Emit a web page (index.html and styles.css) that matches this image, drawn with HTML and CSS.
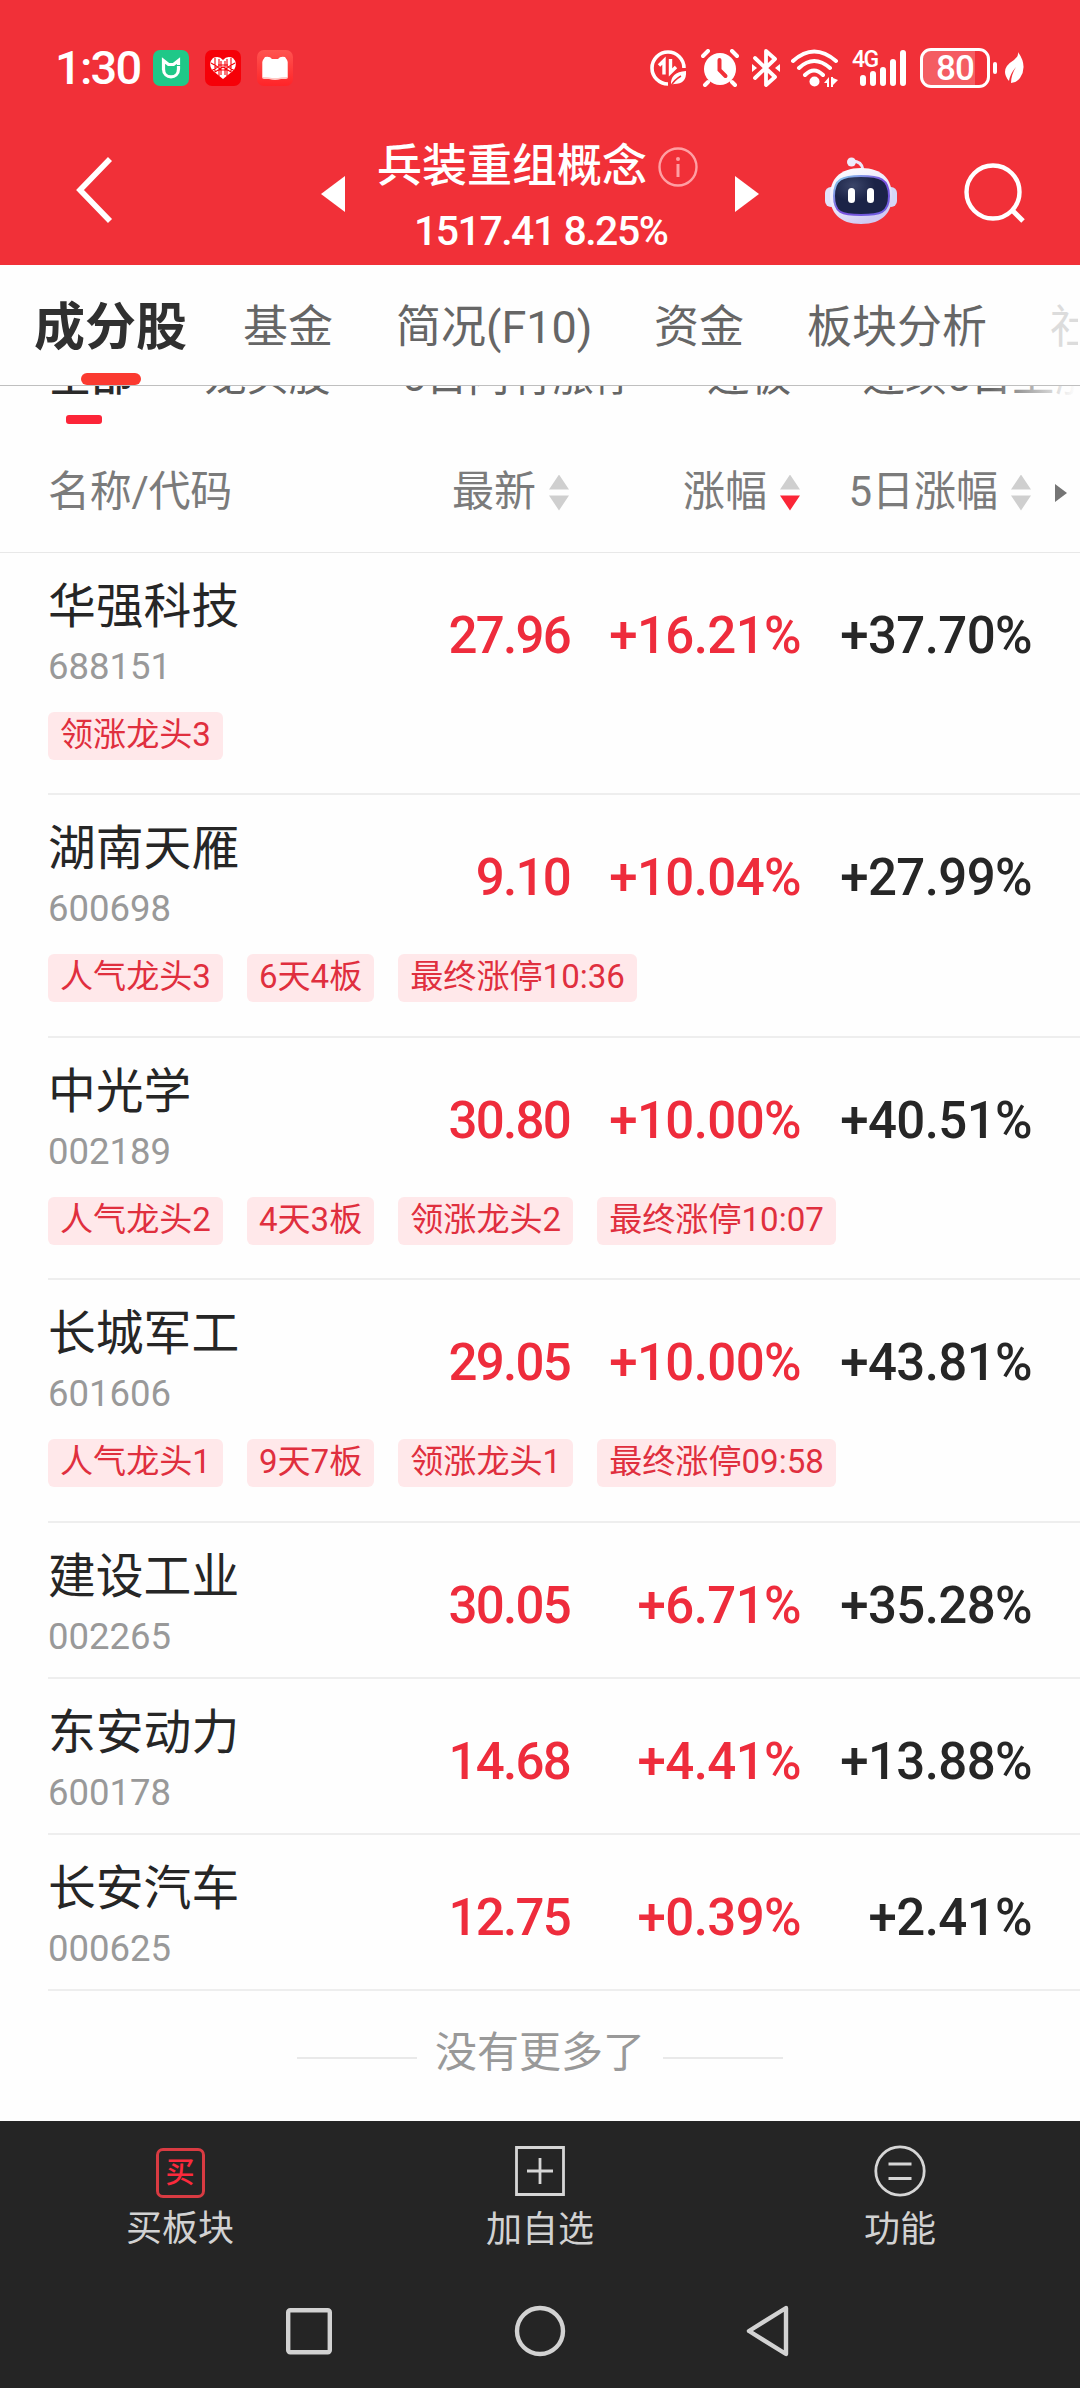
FILE: index.html
```html
<!DOCTYPE html>
<html lang="zh-CN">
<head>
    <meta charset="UTF-8">
    <meta name="viewport" content="width=device-width, initial-scale=1.0">
    <title>兵装重组概念</title>
    <link rel="stylesheet" href="styles.css">
</head>
<body>

    <header class="top">
        <div class="status-bar">
            <span class="clock">1:30</span>
            <div class="app-icons">
                <svg width="36" height="36" viewBox="0 0 36 36"><rect width="36" height="36" rx="7" fill="#1fc888"/><path d="M10.500 20V10.500l5 4h5l5-4V15M10.500 19c0 10.500 15 10.500 15 0v-3" fill="none" stroke="#fff" stroke-width="3.2"/></svg>
                <svg width="36" height="36" viewBox="0 0 36 36"><rect width="36" height="36" rx="7" fill="#f60008"/><path d="M18 29L7 20Q3 13 8 8q6-3 10 2 4-5 10-2 5 5 1 12z" fill="#fff"/><path d="M10 8v14M14 9v17M22 9v17M26 8v14M6 13l7 4-7 4M30 13l-7 4 7 4M13 15h10M13 20h10M16 11v14M20 11v14M10 22l8-5 8 5" fill="none" stroke="#f60008" stroke-width="1.1"/></svg>
                <svg width="36" height="36" viewBox="0 0 36 36"><defs><linearGradient id="book" x2="0" y2="1"><stop stop-color="#ff5450"/><stop offset="1" stop-color="#ff2428"/></linearGradient></defs><rect width="36" height="36" rx="7" fill="url(#book)"/><path d="M5 12q0-2 3-3h20q3 1 3 3v15q0 2-2 2h-5q-6 2-12 0H7q-2 0-2-2z" fill="#ffc9c5"/><path d="M6 10l2-3q5-1 7 2h6q2-3 7-2l2 3v17q-6 0-9 1h-6q-3-1-9-1z" fill="#fff"/></svg>
            </div>
            <div class="sys-icons">
                <svg width="38" height="38" viewBox="0 0 38 38"><path d="M19 35A16 16 0 1 1 35 19" fill="none" stroke="#fff" stroke-width="3.6"/><path d="M10 16.500l5-5v14M21.500 10v13.500l5.500-5.500" fill="none" stroke="#fff" stroke-width="3.4"/><path d="M22 36q-1-13 15-14 1 13-12 13z" fill="#fff"/><path d="M22 37q3-6 10-10" stroke="#f13038" stroke-width="1.5" fill="none"/></svg>
                <svg class="i-alarm" width="38" height="38" viewBox="0 0 38 38"><circle cx="19" cy="20" r="16" fill="#fff"/><path d="M2 7l5-5M31 2l5 5M7 33l-3 3M31 33l3 3" stroke="#fff" stroke-width="4" stroke-linecap="round"/><path d="M18.500 11v10l6 6" fill="none" stroke="#f13038" stroke-width="4" stroke-linecap="round"/></svg>
                <svg class="i-bt" width="28" height="38" viewBox="0 0 28 38"><path d="M3 9l20 19-9 8V2l9 8L3 29" fill="none" stroke="#fff" stroke-width="3.8" stroke-linejoin="round" stroke-linecap="round"/><path d="M0 15l5 4-5 4zM28 15l-5 4 5 4z" fill="#fff"/></svg>
                <svg class="i-wifi" width="48" height="38" viewBox="0 0 48 38"><path d="M2 12q21-19 43 0M8 19q15-14 31 0M14 26q9-9 18 0" fill="none" stroke="#fff" stroke-width="4" stroke-linecap="round"/><circle cx="23.500" cy="32.500" r="5" fill="#fff"/><path d="M33 34l5-6v10h-2v-4zM40 28h2v10h-2zM42 29l5 2-5 5z" fill="#fff"/></svg>
                <svg class="i-signal" width="56" height="38" viewBox="0 0 56 38"><text x="0" y="18" class="net">4G</text><path d="M11 29v5M21 25v9M31 21v13M41 13v21M51 4v30" stroke="#fff" stroke-width="6" stroke-linecap="round"/></svg>
                <div class="battery"><span>80</span></div>
                <i class="battery-cap"></i>
                <svg class="i-leaf" width="22" height="32" viewBox="0 0 22 32"><path d="M14 0Q24 14 16 26q-4 5-9 5 0-8 5-16-6 7-7 14-10-12 5-21 5-4 4-8z" fill="#fff"/></svg>
            </div>
        </div>

        <div class="title-bar">
            <svg class="back" width="40" height="68" viewBox="0 0 40 68"><path d="M36 3L6 34l30 31" fill="none" stroke="#fff" stroke-width="5.6"/></svg>
            <svg class="prev" width="24" height="36" viewBox="0 0 24 36"><path d="M24 0v36L0 18z" fill="#fff"/></svg>
            <div class="title-box">
                <div class="title-line">
                    <h1>兵装重组概念</h1>
                    <svg width="40" height="40" viewBox="0 0 40 40"><circle cx="20" cy="20" r="18.500" fill="none" stroke="#ff9fa3" stroke-width="2.400"/><circle cx="20" cy="12" r="2" fill="#ff9fa3"/><path d="M20 17v13" stroke="#ff9fa3" stroke-width="3"/></svg>
                </div>
                <p class="index-value">1517.41 8.25%</p>
            </div>
            <svg class="next" width="24" height="36" viewBox="0 0 24 36"><path d="M0 0v36l24-18z" fill="#fff"/></svg>
            <svg class="robot" width="72" height="68" viewBox="0 0 72 68">
                <defs>
                    <linearGradient id="shell" x2="0.500" y2="1"><stop stop-color="#fff"/><stop offset="0.600" stop-color="#ebe8fa"/><stop offset="1" stop-color="#d0caf2"/></linearGradient>
                    <linearGradient id="rim" x2="1" y2="1"><stop stop-color="#8bd8ee"/><stop offset="0.500" stop-color="#7a50dc"/><stop offset="1" stop-color="#6c61e0"/></linearGradient>
                    <radialGradient id="face" cx="0.350" cy="0.250"><stop stop-color="#3b4569"/><stop offset="0.800" stop-color="#1b2347"/></radialGradient>
                </defs>
                <path d="M27 4q10 0 11 9" fill="none" stroke="#ece8fa" stroke-width="3"/>
                <circle cx="26.500" cy="5" r="4.500" fill="#eeecfb"/>
                <rect x="0" y="30" width="12" height="20" rx="6" fill="#e3e2fa"/>
                <rect x="60" y="30" width="12" height="20" rx="6" fill="#d5d6f7"/>
                <path d="M36 11c22 0 31 12 31 28S58 67 36 67 5 55 5 39s9-28 31-28z" fill="url(#shell)"/>
                <path d="M36 19c19 0 28 3 28 20s-9 19-28 19S9 56 9 39s8-20 27-20z" fill="url(#face)" stroke="url(#rim)" stroke-width="2"/>
                <rect x="23" y="31" width="7" height="15" rx="3.500" fill="#fff"/>
                <rect x="42" y="31" width="7" height="15" rx="3.500" fill="#fff"/>
            </svg>
            <svg class="search" width="62" height="62" viewBox="0 0 62 62"><circle cx="29" cy="30" r="26.500" fill="none" stroke="#fff" stroke-width="4.400"/><path d="M48 48l11 11" stroke="#fff" stroke-width="5"/></svg>
        </div>
    </header>

    <nav class="tabs">
        <span class="tab active">成分股</span>
        <span class="tab">基金</span>
        <span class="tab f10">简况(F10)</span>
        <span class="tab">资金</span>
        <span class="tab">板块分析</span>
        <span class="tab cut">社</span>
    </nav>

    <div class="filters">
        <span class="filter active">全部</span>
        <span class="filter">龙头股</span>
        <span class="filter">5日内有涨停</span>
        <span class="filter">连板</span>
        <span class="filter">连续5日上涨</span>
    </div>

    <div class="grid table-head">
        <span class="col-name">名称/代码</span>
        <span class="col">最新<i class="sort"></i></span>
        <span class="col">涨幅<i class="sort down"></i></span>
        <span class="col">5日涨幅<i class="sort"></i></span>
        <i class="more"></i>
    </div>

    <main class="stocks">
        <div class="stock">
            <div class="grid quote">
                <div><p class="name">华强科技</p><p class="code">688151</p></div>
                <span class="num price">27.96</span><span class="num red">+16.21%</span><span class="num">+37.70%</span>
            </div>
            <div class="tags"><span>领涨龙头3</span></div>
        </div>
        <div class="stock">
            <div class="grid quote">
                <div><p class="name">湖南天雁</p><p class="code">600698</p></div>
                <span class="num price">9.10</span><span class="num red">+10.04%</span><span class="num">+27.99%</span>
            </div>
            <div class="tags"><span>人气龙头3</span><span>6天4板</span><span>最终涨停10:36</span></div>
        </div>
        <div class="stock">
            <div class="grid quote">
                <div><p class="name">中光学</p><p class="code">002189</p></div>
                <span class="num price">30.80</span><span class="num red">+10.00%</span><span class="num">+40.51%</span>
            </div>
            <div class="tags"><span>人气龙头2</span><span>4天3板</span><span>领涨龙头2</span><span>最终涨停10:07</span></div>
        </div>
        <div class="stock">
            <div class="grid quote">
                <div><p class="name">长城军工</p><p class="code">601606</p></div>
                <span class="num price">29.05</span><span class="num red">+10.00%</span><span class="num">+43.81%</span>
            </div>
            <div class="tags"><span>人气龙头1</span><span>9天7板</span><span>领涨龙头1</span><span>最终涨停09:58</span></div>
        </div>
        <div class="stock short">
            <div class="grid quote">
                <div><p class="name">建设工业</p><p class="code">002265</p></div>
                <span class="num price">30.05</span><span class="num red">+6.71%</span><span class="num">+35.28%</span>
            </div>
        </div>
        <div class="stock short">
            <div class="grid quote">
                <div><p class="name">东安动力</p><p class="code">600178</p></div>
                <span class="num price">14.68</span><span class="num red">+4.41%</span><span class="num">+13.88%</span>
            </div>
        </div>
        <div class="stock short">
            <div class="grid quote">
                <div><p class="name">长安汽车</p><p class="code">000625</p></div>
                <span class="num price">12.75</span><span class="num red">+0.39%</span><span class="num">+2.41%</span>
            </div>
        </div>
    </main>

    <div class="no-more"><i></i><span>没有更多了</span><i></i></div>

    <footer class="bottom">
        <div class="actions">
            <div class="action buy">
                <span class="buy-icon">买</span>
                <p>买板块</p>
            </div>
            <div class="action">
                <svg width="52" height="52" viewBox="0 0 52 52"><path d="M2.500 2.500h47v47h-47zM26 13v26M13 26h26" fill="none" stroke="#d6d6d6" stroke-width="2.800"/></svg>
                <p>加自选</p>
            </div>
            <div class="action">
                <svg width="52" height="52" viewBox="0 0 52 52"><circle cx="26" cy="26" r="24.200" fill="none" stroke="#d6d6d6" stroke-width="2.800"/><path d="M14.500 19h23M14.500 33.500h23" stroke="#d6d6d6" stroke-width="3"/></svg>
                <p>功能</p>
            </div>
        </div>
        <div class="sys-nav">
            <svg width="52" height="52" viewBox="0 0 52 52"><rect x="5.200" y="5.200" width="41.600" height="42" rx="2" fill="none" stroke="#d2d2d2" stroke-width="4.400"/></svg>
            <svg width="52" height="52" viewBox="0 0 52 52"><circle cx="26" cy="26" r="23" fill="none" stroke="#d2d2d2" stroke-width="4.400"/></svg>
            <svg width="52" height="52" viewBox="0 0 52 52"><path d="M41 3L4 26l37 23z" fill="none" stroke="#d2d2d2" stroke-width="4.400" stroke-linejoin="round"/></svg>
        </div>
    </footer>

</body>
</html>
```
FILE: styles.css
```css
:root { --red: #f13038; --up: #ee2c3c; --ink: #262626; --line: #eeeeee; --dark: #252525; --font: Roboto, "Noto Sans CJK SC", sans-serif; }
* { box-sizing: border-box; }
body { margin: 0; width: 1080px; height: 2388px; background: #fefefe; color: var(--ink); font-family: var(--font); overflow: hidden; display: flex; flex-direction: column; }
h1, p { margin: 0; font-weight: 400; }
i { display: block; }
svg { display: block; flex: none; }
span { white-space: nowrap; }

/* header */
.top { background: var(--red); height: 265px; flex: none; color: #fff; }
.status-bar { height: 136px; padding: 0 54px 0 55px; display: flex; align-items: center; }
.clock { font-size: 47px; font-weight: 500; line-height: 56px; width: 98px; letter-spacing: -1.800px; }
.app-icons { display: flex; gap: 16px; }
.sys-icons { display: flex; align-items: center; margin-left: auto; }
.i-alarm { margin-left: 14px; }
.i-bt { margin-left: 13px; }
.i-wifi { margin-left: 11px; }
.i-signal { margin-left: 13px; }
.net { font: 500 23px Roboto, sans-serif; fill: #fff; letter-spacing: -1.500px; }
.battery { width: 70px; height: 40px; margin-left: 12px; border: 3px solid #fff; border-radius: 11px; background: linear-gradient(90deg, #f45d62 52px, transparent 52px); text-align: center; font-size: 35px; font-weight: 500; line-height: 35px; letter-spacing: -1px; }
.battery-cap { width: 4px; height: 12px; margin: 0 7px 0 3px; border-radius: 2px; background: #fff; }

.title-bar { height: 129px; display: flex; align-items: flex-start; padding-left: 74px; }
.back { margin-top: 20px; }
.prev { margin: 40px 0 0 207px; }
.title-box { width: 324px; margin-left: 32px; }
.title-line { display: flex; align-items: center; height: 61px; }
.title-line h1 { font-size: 45px; font-weight: 500; line-height: 62px; width: 281px; padding-top: 1px; }
.index-value { font-size: 41px; font-weight: 500; line-height: 50px; letter-spacing: -1.500px; margin: 9px 0 0 37px; white-space: nowrap; }
.next { margin: 40px 0 0 34px; }
.robot { margin: 21px 0 0 66px; }
.search { margin: 26px 0 0 67px; }

/* tabs */
.tabs { position: relative; width: 1080px; height: 121px; flex: none; padding-left: 34px; border-bottom: 1px solid #bfbfbf; display: flex; align-items: flex-start; }
.tab { flex: none; font-size: 45px; line-height: 62px; margin: 32px 63px 0 0; color: #666; }
.tab.active { font-size: 51px; font-weight: 700; color: #303030; margin-right: 56px; width: 153px; }
.tab.active::after { content: ""; position: absolute; left: 81px; top: 108px; width: 60px; height: 12px; border-radius: 6px; background: #fb3a30; z-index: 2; }
.tab.f10 { width: 195px; }
.tab.cut { color: #dcdcdc; margin-right: 0; width: 28px; overflow: hidden; }

.filters { position: relative; height: 54px; flex: none; padding-left: 49px; display: flex; gap: 71.500px; overflow: hidden; }
.filter { flex: none; font-size: 42px; line-height: 50px; margin-top: -34px; color: #666; }
.filter.active { font-weight: 500; color: #2a2a2a; }
.filter.active::after { content: ""; position: absolute; left: 66px; top: 29px; width: 36px; height: 9px; border-radius: 3px; background: #fc2538; }
.filters::after { content: ""; position: absolute; right: 0; top: 0; width: 90px; height: 54px; background: linear-gradient(90deg, rgba(254,254,254,0), #fefefe 95%); }

/* table */
.grid { display: grid; grid-template-columns: 300px 222px 231px 231px 1fr; padding-left: 48px; }
.table-head { height: 113px; flex: none; border-bottom: 1px solid #e8e8e8; align-items: start; font-size: 42px; line-height: 56px; color: #7b7b7b; padding-top: 24px; }
.col-name { letter-spacing: -0.300px; }
.col { display: flex; justify-content: flex-end; align-items: center; }
.sort { width: 20px; height: 36px; margin: 1px 1px 0 13px; background: #cfcfcf; clip-path: polygon(50% 0, 100% 15px, 0 15px, 50% 0, 50% 100%, 0 21px, 100% 21px, 50% 100%); }
.sort.down { background: linear-gradient(#cfcfcf 50%, #fb2637 50%); }
.more { width: 12px; height: 18px; margin: 20px 0 0 23px; background: #757575; clip-path: polygon(0 0, 100% 50%, 0 100%); }

.stock { height: 242.4px; margin-left: 48px; border-bottom: 2px solid var(--line); }
.stock.short { height: 156px; }
.quote { padding: 24px 0 0; height: 159px; align-items: start; }
.name { font-size: 47.800px; line-height: 60px; }
.code { font-size: 36.500px; line-height: 44px; color: #999; margin-top: 8px; }
.num { font-size: 51px; font-weight: 500; line-height: 60px; text-align: right; letter-spacing: -0.600px; margin-top: 29px; }
.num.price { color: var(--up); letter-spacing: -1.700px; }
.num.red { color: var(--up); }
.tags { display: flex; gap: 24px; }
.tags span { height: 48px; padding: 0 12px; border-radius: 6px; background: #ffe8ea; color: #e02f3e; font-size: 33.100px; line-height: 46px; }

.no-more { display: flex; justify-content: center; align-items: center; gap: 18px; height: 130px; flex: none; }
.no-more i { width: 120px; height: 2px; background: #e9e9e9; margin-top: 4px; }
.no-more span { font-size: 42px; line-height: 56px; color: #999; margin-top: -6px; }

/* bottom */
.bottom { background: var(--dark); flex: 1; color: #d2d2d2; }
.actions { display: flex; height: 150px; padding-top: 24px; }
.action { width: 360px; display: flex; flex-direction: column; align-items: center; font-size: 36px; line-height: 46px; }
.action p { margin-top: 10px; }
.buy-icon { width: 49px; height: 50px; margin: 3px 0 -2px; border: 3px solid #d93b42; border-radius: 7px; color: #fb2a3c; font-size: 29px; font-weight: 500; line-height: 45px; text-align: center; }
.sys-nav { display: flex; justify-content: center; gap: 179px; padding-top: 34px; }
```
